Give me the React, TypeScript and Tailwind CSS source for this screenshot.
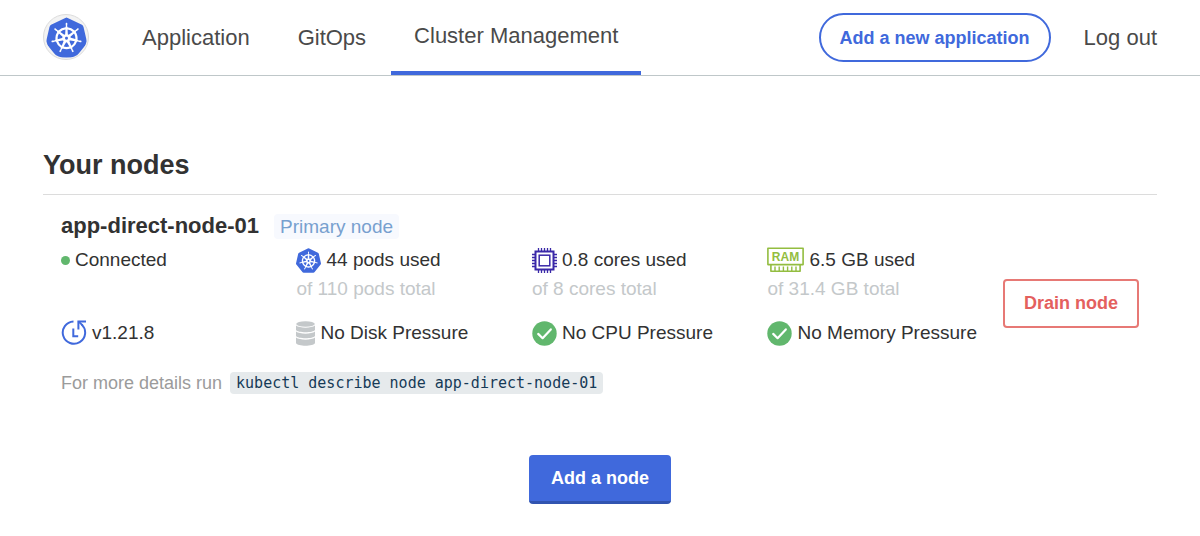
import type { ReactNode } from "react";
import { SiKubernetes } from "react-icons/si";

function VersionIcon() {
  return (
    <svg viewBox="0 0 26 26" className="size-[26px] shrink-0" fill="none" stroke="#4069dc" strokeWidth="2" aria-hidden="true">
      <path d="M12.5 1.4A11.2 11.2 0 1 0 20.8 4.6" />
      <path d="M25 1.4H17.4V9.6" />
      <path d="M17.4 1.4L21.6 5.4" />
      <path d="M12.3 8.4V16.2H17.2" />
    </svg>
  );
}

function DiskIcon() {
  return (
    <svg viewBox="0 0 19 25" className="h-[25px] w-[19px] shrink-0" fill="#c4c8ca" aria-hidden="true">
      <ellipse cx="9.5" cy="3" rx="9.3" ry="2.8" />
      <path d="M0 4.6C3.5 7.4 15.5 7.4 19 4.6V9C17.5 12 1.5 12 0 9Z" />
      <path d="M0 10.6C3.5 13.4 15.5 13.4 19 10.6V15C17.5 18 1.5 18 0 15Z" />
      <path d="M0 16.6C3.5 19.4 15.5 19.4 19 16.6V22C17.5 25.6 1.5 25.6 0 22Z" />
    </svg>
  );
}

function CpuIcon() {
  return (
    <svg viewBox="0 0 25 25" className="size-[25px] shrink-0" fill="none" stroke="#3a28a8" aria-hidden="true">
      <rect x="3.5" y="3.5" width="18" height="18" strokeWidth="2" />
      <rect x="7.2" y="7.2" width="10.6" height="10.6" strokeWidth="1.5" />
      <path
        strokeWidth="1.3"
        d="M6.5 0V3M9.5 0V3M12.5 0V3M15.5 0V3M18.5 0V3M6.5 22V25M9.5 22V25M12.5 22V25M15.5 22V25M18.5 22V25M0 6.5H3M0 9.5H3M0 12.5H3M0 15.5H3M0 18.5H3M22 6.5H25M22 9.5H25M22 12.5H25M22 15.5H25M22 18.5H25"
      />
    </svg>
  );
}

function RamIcon() {
  return (
    <svg viewBox="0 0 37 26" className="h-[26px] w-[37px] shrink-0" fill="none" stroke="#93bd40" aria-hidden="true">
      <path strokeWidth="1.6" strokeLinejoin="round" d="M.9 1.3H36.1V17.6H.9ZM3.9 17.6V24.2H33.1V17.6" />
      <path strokeWidth="1.4" d="M8 19.6V24M12.2 19.6V24M16.4 19.6V24M20.6 19.6V24M24.8 19.6V24M29 19.6V24" />
      <text x="18.5" y="13.6" textAnchor="middle" fontSize="12" fontWeight="700" fill="#93bd40" stroke="none">
        RAM
      </text>
    </svg>
  );
}

function CheckIcon() {
  return (
    <svg viewBox="0 0 25 25" className="size-[25px] shrink-0" fill="none" aria-hidden="true">
      <circle cx="12.5" cy="12.5" r="12.2" fill="#61b76d" />
      <path d="M6.2 12.9L10.6 17.2L18.8 8.4" stroke="white" strokeWidth="2.2" strokeLinecap="round" strokeLinejoin="round" />
    </svg>
  );
}

function Stat({ icon, label, note }: { icon: ReactNode; label: string; note?: string }) {
  return (
    <div>
      <p className="flex h-[26px] items-center gap-[5px]">
        {icon}
        <span>{label}</span>
      </p>
      {note && <p className="mt-1 text-[#c4c8ca]">{note}</p>}
    </div>
  );
}

export default function App() {
  return (
    <div className="min-h-screen bg-white font-['Liberation_Sans',Arial,sans-serif] text-[#323232]">
      <header className="flex h-[76px] items-stretch justify-between border-b border-[#bfc7c9] px-[43px] text-[22px] leading-[26px] text-[#4a4a4a]">
        <nav className="flex items-stretch gap-[2px]">
          <a href="#home" aria-label="Home" className="mt-[14px] flex size-[46px] items-center justify-center rounded-full border border-[#dcdcdc] bg-[#f3f3f3]">
            <SiKubernetes className="size-[41px] rounded-full bg-[radial-gradient(circle,white_55%,transparent_56%)] text-[#4069dc]" />
          </a>
          <a href="#application" className="ml-[28px] flex items-center px-[23px]">Application</a>
          <a href="#gitops" className="flex items-center px-[23px]">GitOps</a>
          <a href="#cluster" aria-current="page" className="flex items-center border-b-4 border-[#4069dc] px-[23px]">
            Cluster Management
          </a>
        </nav>
        <div className="flex items-center gap-[33px]">
          <button type="button" className="h-[49px] rounded-full border-2 border-[#4069dc] px-[19px] text-[18px] font-bold text-[#4069dc]">
            Add a new application
          </button>
          <a href="#logout">Log out</a>
        </div>
      </header>

      <main className="px-[43px] pt-[71px] pb-8">
        <h1 className="border-b border-[#dcdcdc] pb-[11px] text-[27px] leading-[36px] font-bold">Your nodes</h1>

        <section className="flex items-center px-[18px] pt-[18px]">
          <div className="flex-1">
            <div className="flex h-[26px] items-center gap-[15px]">
              <h2 className="text-[22px] leading-[26px] font-bold">app-direct-node-01</h2>
              <span className="rounded-sm bg-[#f7f9fe] px-[6px] text-[19px] leading-[25px] text-[#77a0cf]">Primary node</span>
            </div>

            <div className="mt-2 grid grid-cols-4 gap-y-[19px] text-[19px] leading-[24px]">
              <Stat icon={<span className="size-[9px] rounded-full bg-[#61b76d]" />} label="Connected" />
              <Stat icon={<SiKubernetes className="size-[25px] shrink-0 text-[#4069dc]" aria-hidden="true" />} label="44 pods used" note="of 110 pods total" />
              <Stat icon={<CpuIcon />} label="0.8 cores used" note="of 8 cores total" />
              <Stat icon={<RamIcon />} label="6.5 GB used" note="of 31.4 GB total" />
              <Stat icon={<VersionIcon />} label="v1.21.8" />
              <Stat icon={<DiskIcon />} label="No Disk Pressure" />
              <Stat icon={<CheckIcon />} label="No CPU Pressure" />
              <Stat icon={<CheckIcon />} label="No Memory Pressure" />
            </div>

            <p className="mt-[27px] flex flex-wrap items-center gap-2 text-[18px] leading-[20px] text-[#9b9b9b]">
              For more details run
              <code className="-my-px rounded-sm bg-[#e6eaec] px-[6px] font-['DejaVu_Sans_Mono',monospace] text-[15px] leading-[22px] text-[#163a57]">
                kubectl describe node app-direct-node-01
              </code>
            </p>
          </div>
          <button type="button" className="h-[49px] rounded border-2 border-[#e77975] px-[19px] text-[18px] font-bold text-[#e4605e]">
            Drain node
          </button>
        </section>

        <div className="mt-[62px] flex justify-center">
          <button type="button" className="h-[49px] rounded border-b-[3px] border-[#3154b0] bg-[#4069dc] px-[22px] text-[18px] font-bold text-white">
            Add a node
          </button>
        </div>
      </main>
    </div>
  );
}
